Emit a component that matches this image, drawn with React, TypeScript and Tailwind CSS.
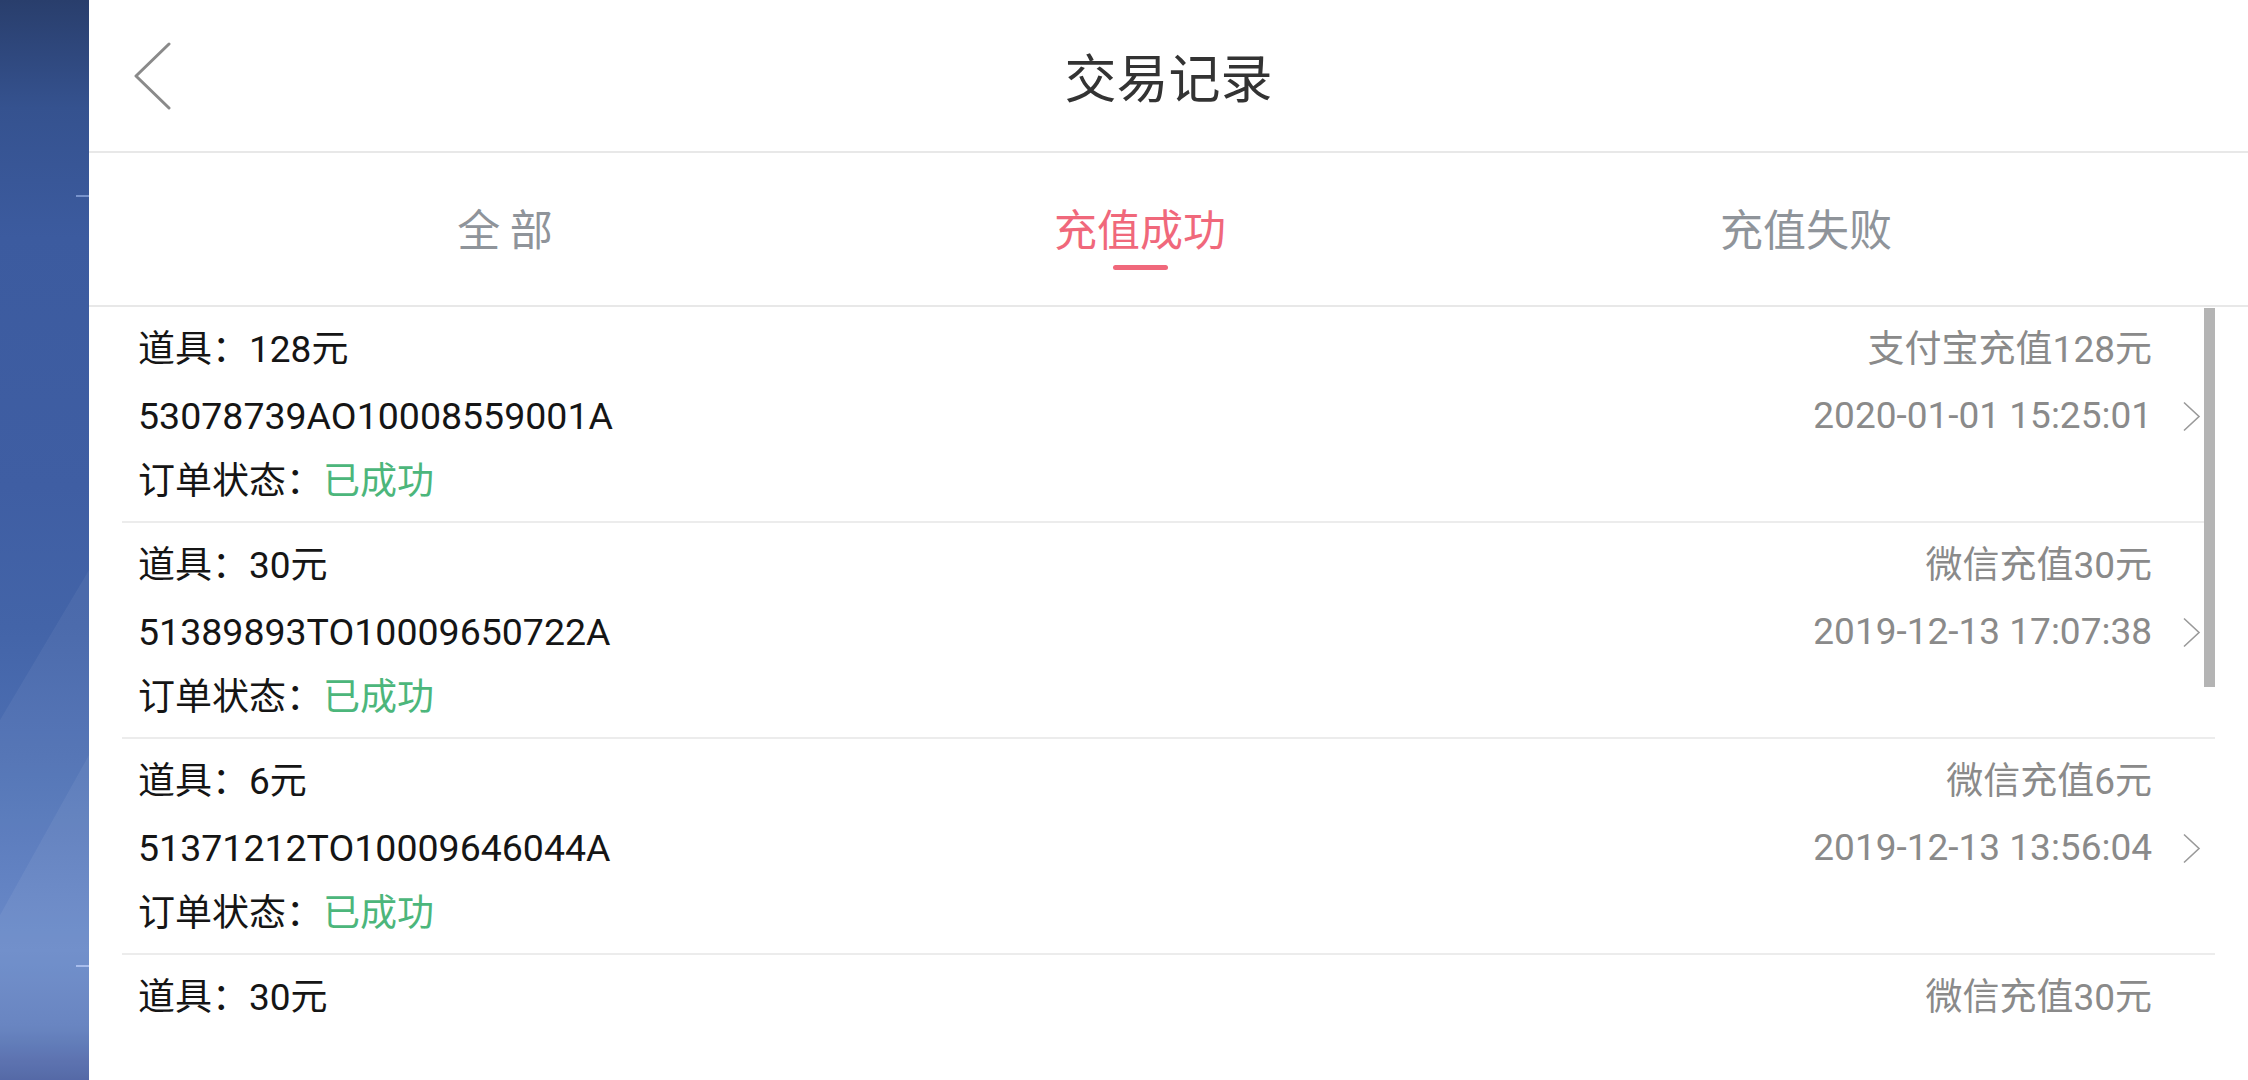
import React from "react";

type Record = {
  item: string;
  orderNo?: string;
  channel: string;
  time?: string;
};

const records: Record[] = [
  { item: "128元", orderNo: "53078739AO10008559001A", channel: "支付宝充值128元", time: "2020-01-01 15:25:01" },
  { item: "30元", orderNo: "51389893TO10009650722A", channel: "微信充值30元", time: "2019-12-13 17:07:38" },
  { item: "6元", orderNo: "51371212TO10009646044A", channel: "微信充值6元", time: "2019-12-13 13:56:04" },
  { item: "30元", channel: "微信充值30元" },
];

const tabs = [
  { label: "全 部", cls: "ml-[266px]" },
  { label: "充值成功", cls: "ml-[335px]" },
  { label: "充值失败", cls: "ml-[366px]" },
];

const BackIcon = () => (
  <svg width="40" height="68" viewBox="0 0 40 68" fill="none">
    <polyline points="36,2 3,34 36,66" stroke="#8a8a8a" strokeWidth="3" strokeLinecap="round" strokeLinejoin="round" />
  </svg>
);

const Chevron = () => (
  <svg width="19" height="31" viewBox="0 0 19 31" fill="none" className="shrink-0">
    <polyline points="2,1.5 17,15.5 2,29.5" stroke="#9a9a9a" strokeWidth="1.6" strokeLinejoin="miter" />
  </svg>
);

const SidePanel = () => (
  <div className="relative h-full w-[89px] shrink-0 overflow-hidden bg-[linear-gradient(180deg,#293e6c_0%,#35528f_10%,#3c5b9f_22%,#3f5ea3_45%,#4364a8_58%,#4d6fb3_70%,#5b7dc0_82%,#6284c6_88%,#5878bb_95%,#42589d_100%)]">
    <svg className="absolute inset-0" width="89" height="1080" viewBox="0 0 89 1080">
      <polygon points="0,720 89,570 89,1080 0,1080" fill="#ffffff" opacity="0.05" />
      <polygon points="0,915 89,755 89,1080 0,1080" fill="#ffffff" opacity="0.06" />
    </svg>
    <div className="absolute left-[76px] top-[195px] h-[2px] w-[13px] bg-[#7893cc]" />
    <div className="absolute left-[76px] top-[965px] h-[2px] w-[13px] bg-[#a8bdec]" />
  </div>
);

const Row = ({ r }: { r: Record }) => (
  <div className="flex h-[216px] shrink-0 justify-between border-b-2 border-[#ececec] pl-[16px] pr-[14px] pt-[10px]">
    <div className="flex flex-col text-[37px] leading-[66px] text-[#151515]">
      <p>道具：{r.item}</p>
      {r.orderNo && (
        <>
          <p className="text-[37.5px]">{r.orderNo}</p>
          <p>
            订单状态：<span className="text-[#4cb67b]">已成功</span>
          </p>
        </>
      )}
    </div>
    <div className="flex flex-col items-end text-[37px] leading-[66px] text-[#8a8a8a]">
      <p className="mr-[49px]">{r.channel}</p>
      {r.time && (
        <div className="flex items-center gap-[30px]">
          <span>{r.time}</span>
          <Chevron />
        </div>
      )}
    </div>
  </div>
);

export default function App() {
  return (
    <div className="flex h-[1080px] w-[2248px] overflow-hidden bg-white font-['Roboto','Noto_Sans_CJK_SC',sans-serif]">
      <SidePanel />
      <main className="flex min-w-0 flex-1 flex-col bg-white">
        <header className="grid h-[153px] shrink-0 grid-cols-[1fr_auto_1fr] items-center border-b-2 border-[#e8e8e8]">
          <div className="flex items-center pl-[44px]">
            <BackIcon />
          </div>
          <h1 className="font-['Noto_Sans_CJK_SC',sans-serif] text-[52px] leading-none text-[#333333]">交易记录</h1>
          <div />
        </header>

        <nav className="flex h-[154px] shrink-0 items-start border-b-2 border-[#e8e8e8] pt-[52px]">
          {tabs.map((t, idx) => {
            const active = idx === 1;
            return (
              <div key={t.label} className={"flex w-[300px] flex-col items-center " + t.cls}>
                <span
                  className={
                    "whitespace-pre font-['Noto_Sans_CJK_SC',sans-serif] text-[43px] leading-[44px] " +
                    (active ? "text-[#f0687b]" : "text-[#8f949a]")
                  }
                >
                  {t.label}
                </span>
                <div className={"mt-[16px] h-[5px] w-[55px] rounded-full " + (active ? "bg-[#f0687b]" : "bg-transparent")} />
              </div>
            );
          })}
        </nav>

        <div className="relative mx-[33px] flex flex-1 flex-col overflow-hidden">
          {records.map((r, idx) => (
            <Row key={r.item + idx} r={r} />
          ))}
          <div className="absolute right-0 top-[1px] h-[379px] w-[11px] bg-[#b4b4b4]" />
        </div>
      </main>
    </div>
  );
}
